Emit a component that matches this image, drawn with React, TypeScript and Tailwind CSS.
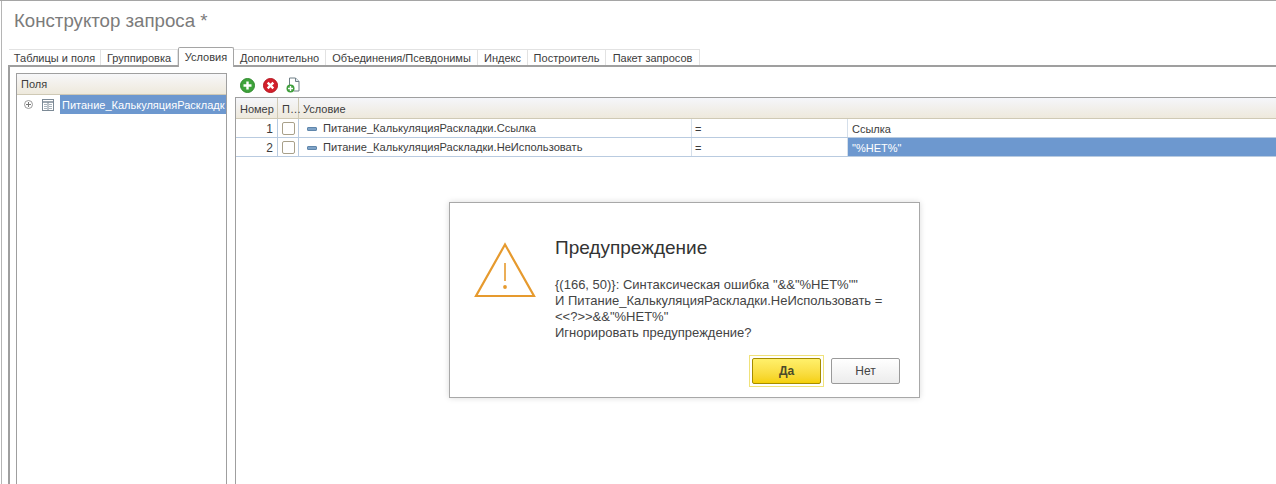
const font = { fontFamily: '"Liberation Sans", Arial, sans-serif' };

const tabs = [
  { label: "Таблицы и поля", w: "w-[92px]" },
  { label: "Группировка", w: "w-[77px]" },
  { label: "Условия", w: "w-[56px]", active: true },
  { label: "Дополнительно", w: "w-[92px]" },
  { label: "Объединения/Псевдонимы", w: "w-[152px]" },
  { label: "Индекс", w: "w-[50px]" },
  { label: "Построитель", w: "w-[78px]" },
  { label: "Пакет запросов", w: "w-[94px]" },
];

const rows = [
  { n: 1, field: "Питание_КалькуляцияРаскладки.Ссылка", value: "Ссылка" },
  { n: 2, field: "Питание_КалькуляцияРаскладки.НеИспользовать", value: '"%НЕТ%"', selected: true },
];

function RoundIcon({ color, border, kind }: { color: string; border: string; kind: "plus" | "cross" }) {
  return (
    <svg width="15" height="15" viewBox="0 0 15 15">
      <circle cx="7.5" cy="7.5" r="7" fill={color} stroke={border} strokeWidth="1" />
      {kind === "plus" ? (
        <path d="M7.5 3.5v8M3.5 7.5h8" stroke="#fff" strokeWidth="2.4" />
      ) : (
        <path d="M4.7 4.7l5.6 5.6M10.3 4.7l-5.6 5.6" stroke="#fff" strokeWidth="2.4" />
      )}
    </svg>
  );
}

function DocIcon() {
  return (
    <svg width="14" height="16" viewBox="0 0 14 16">
      <path d="M3.5 9V1h6l3.5 3.5V14H8" fill="#fff" stroke="#6f7f86" strokeWidth="1" />
      <path d="M9.5 1v3.5H13" fill="#dfe8ee" stroke="#6f7f86" strokeWidth="1" />
      <circle cx="4.5" cy="11.5" r="4" fill="#3f9e3c" />
      <path d="M4.5 9v5M2 11.5h5" stroke="#fff" strokeWidth="1.4" />
    </svg>
  );
}

function TableIcon() {
  return (
    <svg width="12" height="12" viewBox="0 0 12 12">
      <rect x="0.5" y="0.5" width="11" height="11" fill="#fff" stroke="#7c8a96" />
      <path d="M0.5 3h11" stroke="#7c8a96" strokeWidth="1.5" />
      <path d="M6 3v8.5" stroke="#7c8a96" strokeWidth="1" />
      <path d="M2 5.5h3M2 7.5h3M2 9.5h3M7 5.5h3M7 7.5h3M7 9.5h3" stroke="#a9b4bd" strokeWidth="1" />
    </svg>
  );
}

function ExpandIcon() {
  return (
    <svg width="9" height="9" viewBox="0 0 9 9">
      <circle cx="4.5" cy="4.5" r="4" fill="#fff" stroke="#9a9a9a" />
      <path d="M4.5 2v5M2 4.5h5" stroke="#777" strokeWidth="1" />
    </svg>
  );
}

function WarningIcon() {
  return (
    <svg width="62" height="56" viewBox="0 0 62 56">
      <path d="M31 2.5L2 54h58z" fill="none" stroke="#e69a2e" strokeWidth="2.2" />
      <path d="M31 21v18" stroke="#e69a2e" strokeWidth="1.6" />
      <circle cx="31" cy="45" r="1.9" fill="#e69a2e" />
    </svg>
  );
}

export default function App() {
  return (
    <div className="relative w-[1276px] h-[484px] overflow-hidden bg-white text-[11px] text-[#3c3c3c]" style={font}>
      <div className="h-full border-t border-[#a5a5a5] flex flex-col">
        <div className="h-full ml-px border-l border-[#b5b5b5] flex flex-col">
          <div className="h-[45px] pl-[12px] pt-[8px] text-[18.67px] leading-[24px] text-[#7b7b7b] shrink-0">
            Конструктор запроса *
          </div>

          {/* tabs */}
          <div className="flex items-end h-[19px] pl-[7px] shrink-0">
            {tabs.map((t) => (
              <div
                key={t.label}
                className={
                  t.active
                    ? "w-[56px] h-[20px] -mb-[2px] z-10 flex items-center justify-center bg-white border border-b-0 border-[#a5a5a5] rounded-t-[2px]"
                    : `${t.w} h-[16px] flex items-center justify-center border-t border-r border-[#e2e2e2] pt-[1px]`
                }
              >
                {t.label}
              </div>
            ))}
          </div>

          <div className="flex-1 min-h-0 ml-[6px] border-t-2 border-l-2 border-[#9f9f9f] flex pl-[6px] pt-[6px]">
            {/* fields panel */}
            <div className="w-[211px] border border-b-0 border-[#9f9f9f] shrink-0 flex flex-col">
              <div className="h-[21px] pl-[4px] flex items-center bg-gradient-to-b from-[#f7f7f9] to-[#eee9dc] border-b border-[#cfc9b5]">
                Поля
              </div>
              <div className="h-[19px] flex items-center">
                <div className="pl-[7px] w-[25px] flex"><ExpandIcon /></div>
                <div className="w-[18px] flex"><TableIcon /></div>
                <div className="flex-1 h-full bg-[#6d98cf] text-white pl-[2px] leading-[21px] overflow-hidden whitespace-nowrap">
                  Питание_КалькуляцияРаскладк
                </div>
              </div>
            </div>

            {/* conditions */}
            <div className="flex-1 min-w-0 ml-[8px] flex flex-col">
              <div className="h-[24px] flex items-center pl-[5px] gap-[8px] shrink-0">
                <RoundIcon color="#3ea33b" border="#2f8a2d" kind="plus" />
                <RoundIcon color="#d3202c" border="#b5151f" kind="cross" />
                <DocIcon />
              </div>
              <div className="flex-1 border-l border-[#9f9f9f]">
                <div className="h-[22px] flex border-t border-[#9f9f9f] border-b border-b-[#cfc9b5] bg-gradient-to-b from-[#f5f6fa] to-[#eee9dc]">
                  <div className="w-[42px] pl-[4px] leading-[22px] border-r border-[#cfc9b5]">Номер</div>
                  <div className="w-[21px] pl-[4px] leading-[22px] border-r border-[#cfc9b5]">П…</div>
                  <div className="pl-[4px] leading-[22px]">Условие</div>
                </div>
                {rows.map((r) => (
                  <div key={r.n} className="h-[19px] flex border-b border-[#b9cbe0]">
                    <div className="w-[42px] pr-[4px] text-right text-[12px] leading-[20px] border-r border-[#b9cbe0]">{r.n}</div>
                    <div className="w-[21px] flex items-center justify-center border-r border-[#b9cbe0]">
                      <div className="w-[13px] h-[13px] rounded-[2px] border border-[#a8a08a] bg-white" />
                    </div>
                    <div className="w-[393px] flex items-center pl-[8px] pt-[1px] text-[11.13px] border-r border-[#d5dfea]">
                      <div className="w-[10px] h-[4px] rounded-[1px] bg-[#7fa3c7] border border-[#5f86ab] mr-[6px]" />
                      {r.field}
                    </div>
                    <div className="w-[156px] pl-[3px] leading-[20px] border-r border-[#d5dfea]">=</div>
                    <div className={r.selected ? "flex-1 pl-[4px] leading-[20px] bg-[#6d98cf] text-white" : "flex-1 pl-[4px] leading-[20px]"}>
                      {r.value}
                    </div>
                  </div>
                ))}
              </div>
            </div>
          </div>
        </div>
      </div>

      {/* warning dialog */}
      <div className="absolute left-[449px] top-[202px] w-[471px] h-[196px] bg-white border border-[#a8a8a8] shadow-[0_0_6px_rgba(0,0,0,0.15)] flex">
        <div className="w-[105px] pl-[24px] pt-[39px] shrink-0"><WarningIcon /></div>
        <div className="flex-1 pt-[33px] flex flex-col">
          <div className="text-[19px] leading-[24px] text-[#333]">Предупреждение</div>
          <div className="mt-[17px] text-[13px] leading-[16px] text-[#444]">
            <div>{'{(166, 50)}: Синтаксическая ошибка "&&"%НЕТ%""'}</div>
            <div>И Питание_КалькуляцияРаскладки.НеИспользовать =</div>
            <div>{'<<?>>&&"%НЕТ%"'}</div>
            <div>Игнорировать предупреждение?</div>
          </div>
          <div className="mt-[14px] flex justify-end pr-[19px] gap-[7px] items-center">
            <div className="border border-[#f0e27a] p-[2px]">
              <div className="w-[69px] h-[26px] rounded-[2px] border border-[#a58c00] bg-gradient-to-b from-[#fff06a] to-[#f5d000] flex items-center justify-center text-[12px] font-bold text-[#4a4a2a]">
                Да
              </div>
            </div>
            <div className="w-[69px] h-[26px] rounded-[2px] border border-[#9a9a9a] bg-gradient-to-b from-white to-[#ececec] flex items-center justify-center text-[12px] text-[#444]">
              Нет
            </div>
          </div>
        </div>
      </div>
    </div>
  );
}
